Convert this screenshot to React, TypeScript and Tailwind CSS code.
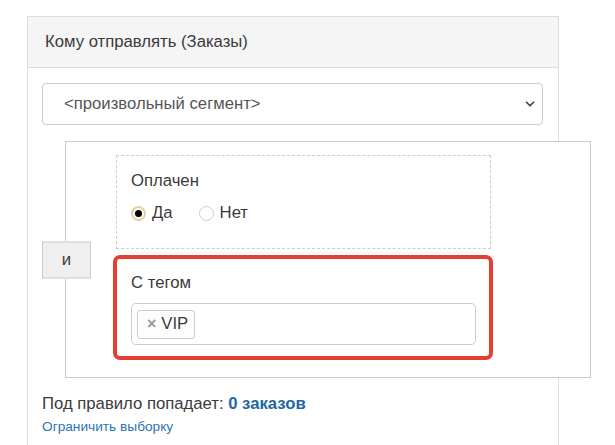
import { ChevronDown } from 'lucide-react';

/**
 * RECIPIENT RULES PANEL
 * Segment picker with nested "and" conditions
 */

function Radio({ checked, label }: { checked?: boolean; label: string }) {
  return (
    <label className="flex items-center gap-[6px]">
      {checked ? (
        <span className="flex size-[15px] items-center justify-center rounded-full border-2 border-[#e3cfa6] bg-[#fffaf0]">
          <span className="size-[7px] rounded-full bg-black" />
        </span>
      ) : (
        <span className="size-[15px] rounded-full border border-[#cfcfcf] bg-white" />
      )}
      <span>{label}</span>
    </label>
  );
}

export default function App() {
  return (
    <div className="h-[445px] overflow-hidden bg-white font-['Liberation_Sans',Arial,sans-serif] text-[16.7px] leading-[20px] text-[#3a3a3a]">
      <div className="ml-[27px] mt-[16px] h-[460px] w-[532px] border border-[#dddddd]">
        {/* Header */}
        <div className="flex h-[51px] items-center border-b border-[#dddddd] bg-[#f5f5f5] pl-[17px]">
          Кому отправлять (Заказы)
        </div>

        {/* Body */}
        <div className="px-[14px] pt-[15px]">
          <div className="flex h-[42px] w-[501px] items-center justify-between rounded-[4px] border border-[#cccccc] pl-[21px] pr-[5px] text-[#555555]">
            <span>&lt;произвольный сегмент&gt;</span>
            <ChevronDown className="size-[14px] text-[#444444]" strokeWidth={3} />
          </div>

          {/* Conditions group */}
          <div className="relative ml-[23px] mt-[16px] w-[526px] border border-[#cccccc] bg-white pb-[17px] pl-[50px] pt-[13px]">
            <div className="absolute left-[-24px] top-1/2 flex h-[37px] w-[49px] -translate-y-1/2 items-center justify-center border border-[#cccccc] bg-[#efefef]">
              и
            </div>

            <div className="h-[94px] w-[375px] border border-dashed border-[#cccccc] pl-[14px] pt-[15px]">
              <div>Оплачен</div>
              <div className="mt-[12px] flex items-center gap-[26px]">
                <Radio checked label="Да" />
                <Radio label="Нет" />
              </div>
            </div>

            <div className="-ml-[3px] mt-[6px] h-[105px] w-[380px] rounded-[7px] border-4 border-[#e53f34] pl-[14px] pt-[14px]">
              <div>С тегом</div>
              <div className="mt-[10px] flex h-[42px] w-[345px] items-center rounded-[5px] border border-[#cccccc] pl-[5px]">
                <span className="flex h-[29px] items-center gap-[5px] rounded-[3px] border border-[#cccccc] bg-[#fdfdfd] pl-[9px] pr-[6px]">
                  <span className="text-[16px] font-bold text-[#9a9a9a]">×</span>
                  <span>VIP</span>
                </span>
              </div>
            </div>
          </div>

          {/* Summary */}
          <div className="mt-[16px]">
            Под правило попадает: <span className="font-bold text-[#1f66a3]">0 заказов</span>
          </div>
          <div className="mt-[3px] text-[13.7px] text-[#2f74b5]">Ограничить выборку</div>
        </div>
      </div>
    </div>
  );
}
